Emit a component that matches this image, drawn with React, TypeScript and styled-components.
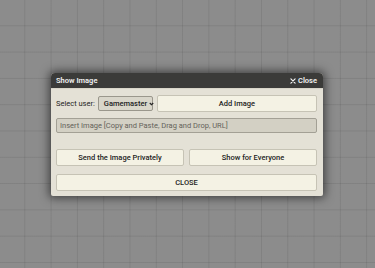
import styled, { createGlobalStyle } from "styled-components";

const GlobalStyle = createGlobalStyle`
  html, body {
    margin: 0;
    padding: 0;
  }
  body {
    font-family: Roboto, "Liberation Sans", sans-serif;
    background-color: #8c8c8c;
    background-image:
      linear-gradient(to right, rgba(60, 60, 60, 0.14) 1px, transparent 1px),
      linear-gradient(to bottom, rgba(60, 60, 60, 0.14) 1px, transparent 1px);
    background-size: 26.3px 26.3px;
    background-position: -2px -1px;
  }
`;

const Page = styled.div`
  height: 268px;
  display: flex;
  align-items: center;
  justify-content: center;
`;

const Dialog = styled.div`
  width: 272px;
  margin-left: -1px;
  margin-top: 1px;
  background: #e4e1d6;
  border-radius: 4px 4px 2px 2px;
  box-shadow: 0 0 10px 2px rgba(0, 0, 0, 0.55);
  overflow: hidden;
`;

const Header = styled.div`
  height: 15px;
  background: #3b3b39;
  color: #f2f2f2;
  display: flex;
  align-items: center;
  justify-content: space-between;
  padding: 0 6px 0 5px;
  font-size: 7.5px;
  font-weight: 600;
  border-bottom: 1px solid #d8d5c9;
`;

const CloseLink = styled.span`
  display: flex;
  align-items: center;
  gap: 2px;
`;

const Body = styled.div`
  padding: 5px 6px 5px 5px;
  display: flex;
  flex-direction: column;
`;

const Row = styled.div<{ $top?: number }>`
  display: flex;
  align-items: center;
  gap: 5px;
  margin-top: ${(p) => p.$top ?? 0}px;
`;

const Label = styled.span`
  font-size: 7.5px;
  color: #1e1e1e;
  white-space: nowrap;
  margin-right: -2px;
`;

const Select = styled.div`
  width: 55px;
  height: 15px;
  margin-right: -1px;
  box-sizing: border-box;
  border: 1px solid #9a978c;
  border-radius: 2px;
  background: #d9d6ca;
  display: flex;
  align-items: center;
  justify-content: space-between;
  gap: 2px;
  padding: 0 2px 0 5px;
  font-size: 7.5px;
  font-weight: 500;
  color: #1e1e1e;
  white-space: nowrap;

  svg {
    flex-shrink: 0;
  }
`;

const Button = styled.div<{ $upper?: boolean }>`
  flex: 1;
  height: 17px;
  box-sizing: border-box;
  border: 1px solid #c6c3b5;
  border-radius: 2px;
  background: #f4f2e4;
  display: flex;
  align-items: center;
  justify-content: center;
  font-size: 7.5px;
  font-weight: 500;
  color: #1e1e1e;
  text-transform: ${(p) => (p.$upper ? "uppercase" : "none")};
`;

const Input = styled.div`
  height: 15px;
  margin-top: 6px;
  box-sizing: border-box;
  border: 1px solid #a3a095;
  border-radius: 2px;
  background: #d3d0c4;
  display: flex;
  align-items: center;
  padding: 0 3px;
  font-size: 7.5px;
  color: #64625a;
`;

export default function App() {
  return (
    <>
      <GlobalStyle />
      <Page>
        <Dialog>
          <Header>
            <span>Show Image</span>
            <CloseLink>
              <svg width="6" height="6" viewBox="0 0 10 10">
                <path
                  d="M1.5 1.5 L8.5 8.5 M8.5 1.5 L1.5 8.5"
                  stroke="#f2f2f2"
                  strokeWidth="2"
                  strokeLinecap="round"
                />
              </svg>
              Close
            </CloseLink>
          </Header>
          <Body>
            <Row $top={1}>
              <Label>Select user:</Label>
              <Select>
                <span>Gamemaster</span>
                <svg width="5" height="4" viewBox="0 0 10 8">
                  <path
                    d="M1.5 2 L5 5.5 L8.5 2"
                    fill="none"
                    stroke="#222"
                    strokeWidth="2.2"
                  />
                </svg>
              </Select>
              <Button>Add Image</Button>
            </Row>
            <Input>Insert Image [Copy and Paste, Drag and Drop, URL]</Input>
            <Row $top={16}>
              <Button>Send the Image Privately</Button>
              <Button>Show for Everyone</Button>
            </Row>
            <Row $top={8}>
              <Button $upper>Close</Button>
            </Row>
          </Body>
        </Dialog>
      </Page>
    </>
  );
}
